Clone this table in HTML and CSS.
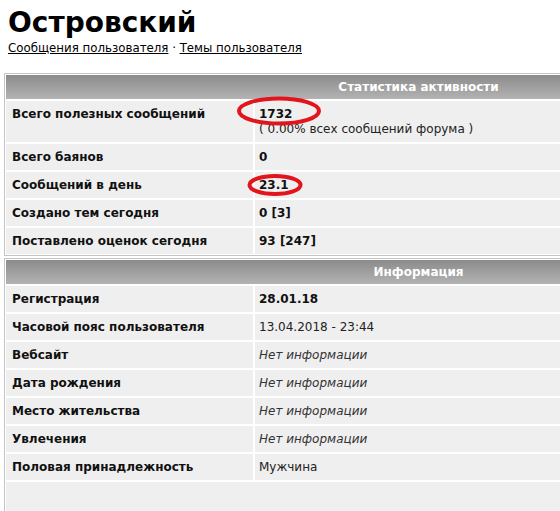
FILE: index.html
```html
<!DOCTYPE html>
<html lang="ru">
<head>
<meta charset="utf-8">
<title>Островский</title>
<link rel="stylesheet" href="styles.css">
</head>
<body>
<h1 class="title">Островский</h1>
<div class="links"><a href="#">Сообщения пользователя</a> · <a href="#">Темы пользователя</a></div>

<div class="panel">
  <div class="phead"><span class="phead-title">Статистика активности</span></div>
  <div class="lab">Всего полезных сообщений</div>
  <div class="val"><b>1732</b><div class="sub">( 0.00% всех сообщений форума )</div></div>
  <div class="lab">Всего баянов</div>
  <div class="val"><b>0</b></div>
  <div class="lab">Сообщений в день</div>
  <div class="val"><b>23.1</b></div>
  <div class="lab">Создано тем сегодня</div>
  <div class="val"><b>0 [3]</b></div>
  <div class="lab">Поставлено оценок сегодня</div>
  <div class="val"><b>93 [247]</b></div>
  <svg class="mark mark-a" width="90" height="32" viewBox="0 0 90 32"><ellipse cx="45" cy="16" rx="40" ry="12.5" fill="none" stroke="#e2141c" stroke-width="4"/></svg>
  <svg class="mark mark-b" width="60" height="24" viewBox="0 0 60 24"><ellipse cx="30" cy="12" rx="25.5" ry="9" fill="none" stroke="#e2141c" stroke-width="4"/></svg>
</div>

<div class="panel panel-info">
  <div class="phead"><span class="phead-title">Информация</span></div>
  <div class="lab">Регистрация</div>
  <div class="val"><b>28.01.18</b></div>
  <div class="lab">Часовой пояс пользователя</div>
  <div class="val">13.04.2018 - 23:44</div>
  <div class="lab">Вебсайт</div>
  <div class="val"><i>Нет информации</i></div>
  <div class="lab">Дата рождения</div>
  <div class="val"><i>Нет информации</i></div>
  <div class="lab">Место жительства</div>
  <div class="val"><i>Нет информации</i></div>
  <div class="lab">Увлечения</div>
  <div class="val"><i>Нет информации</i></div>
  <div class="lab">Половая принадлежность</div>
  <div class="val">Мужчина</div>
  <div class="filler"></div>
</div>
</body>
</html>
```
FILE: styles.css
```css
html, body {
  overflow: hidden;
}
body {
  margin: 0;
  padding: 5px 0 0 0;
  background: #fff;
  font-family: "DejaVu Sans", Verdana, sans-serif;
  font-size: 12px;
  color: #000;
}
.title {
  margin: 0;
  padding-left: 8px;
  font-size: 28px;
  line-height: 35px;
  font-weight: bold;
}
.links {
  padding-left: 8px;
  line-height: 16px;
  font-size: 11.8px;
  color: #000;
}
.links a {
  color: #000;
  text-decoration: underline;
}
.panel {
  position: relative;
  margin: 17px 0 0 4px;
  width: 576px;
  border: 1px solid #c4c4c4;
  padding: 1px;
  background: #fff;
  display: grid;
  grid-template-columns: 247px 1fr;
  column-gap: 2px;
  row-gap: 2px;
}
.panel-info {
  margin-top: 2px;
}
.phead {
  grid-column: 1 / 3;
  height: 24px;
  background: linear-gradient(#8b8b8b, #b3b3b3);
  display: grid;
  grid-template-columns: 249px 1fr;
}
.phead-title {
  grid-column: 2;
  text-align: center;
  color: #fff;
  font-weight: bold;
  line-height: 24px;
}
.lab, .val {
  background: #efefef;
  padding: 5px 4px;
  line-height: 16px;
}
.lab {
  padding-left: 6px;
  font-weight: bold;
  color: #111;
}
.val {
  color: #222;
}
.val b {
  color: #111;
}
.val i {
  color: #333;
}
.sub {
  line-height: 15px;
}
.filler {
  grid-column: 1 / 3;
  height: 80px;
  background: #efefef;
}
.mark {
  position: absolute;
}
.mark-a {
  left: 229px;
  top: 21px;
}
.mark-b {
  left: 240px;
  top: 99px;
}
```
